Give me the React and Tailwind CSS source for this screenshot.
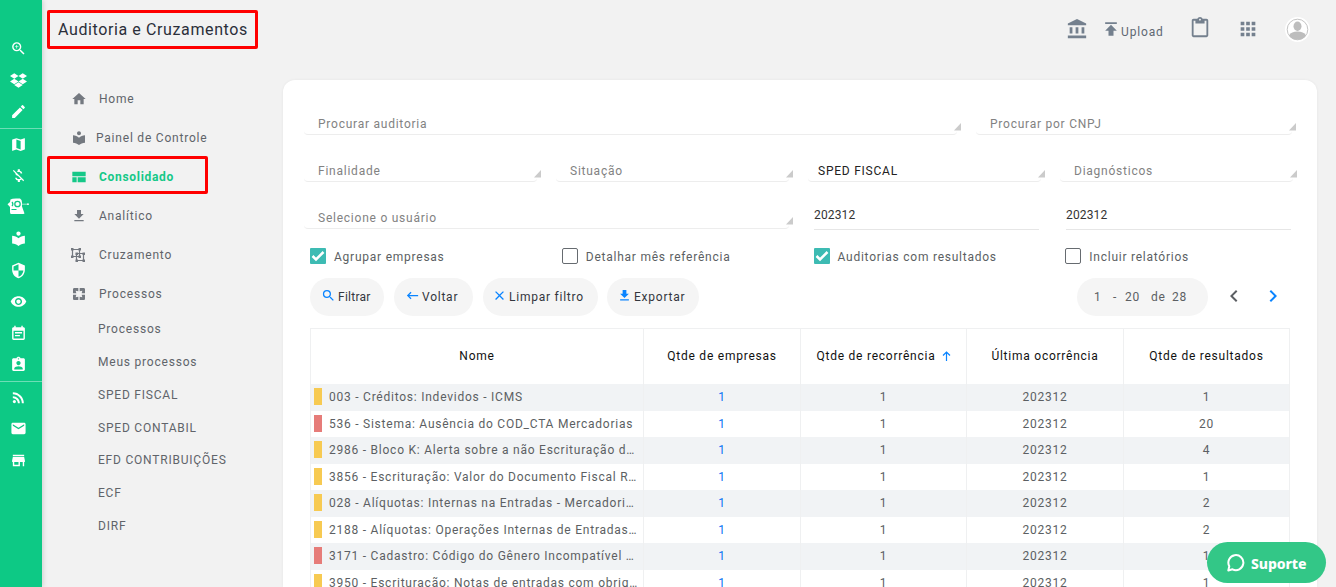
import {
  MdZoomIn, MdEdit, MdMap, MdMoneyOff, MdLocalLibrary, MdSecurity, MdVisibility,
  MdEventNote, MdAssignmentInd, MdRssFeed, MdMail, MdStore, MdHome, MdPages,
  MdAccountBalance, MdPublish, MdContentPaste, MdApps, MdSearch, MdClose,
  MdKeyboardBackspace, MdChevronLeft, MdChevronRight,
} from 'react-icons/md'
import { FaDropbox } from 'react-icons/fa'

function LayoutIcon({ size }) {
  return (
    <svg width={size} height={size} viewBox="0 0 24 24" fill="currentColor">
      <path d="M2 4v7h20V4zM2 12.5V20h6.5v-7.5zM10 12.5V20h12v-7.5z" />
    </svg>
  )
}

function DownloadIcon({ size }) {
  return (
    <svg width={size} height={size} viewBox="0 0 24 24" fill="currentColor">
      <path d="M19 9h-4V3H9v6H5l7 7 7-7zM5 18v2h14v-2H5z" />
    </svg>
  )
}

function UngroupIcon() {
  return (
    <svg width="14" height="14" viewBox="0 0 14 14" fill="none">
      <path d="M1.500 1.500h7v7h-7zM5.500 5.500h7v7h-7z" stroke="currentColor" strokeWidth="1.200" />
      <path
        d="M0 0h2.500v2.500H0zM7.500 0H10v2.500H7.500zM0 7.500h2.500V10H0zM7.500 7.500H10V10H7.500zM4.500 4.500H7V7H4.500zM11.500 4.500H14V7h-2.500zM4.500 11.500H7V14H4.500zM11.500 11.500H14V14h-2.500z"
        fill="currentColor"
      />
    </svg>
  )
}

function RobotIcon() {
  return (
    <svg className="shrink-0" width="23" height="18" viewBox="0 0 23 18" fill="none">
      <path d="M3.500 1.500Q5 .5 9 .5h4q2 1 2 4v4l2.500 7-1 .5H4Q3 16 3 14V9L.5 6.200 3 4z" fill="#fff" />
      <path d="M15 6.200h6" stroke="#fff" strokeWidth="0.600" />
      <circle cx="21" cy="6.200" r="0.900" fill="#fff" />
      <circle cx="10.500" cy="6" r="2.700" stroke="#0dc985" strokeWidth="1.300" />
      <path d="M5 4q1.800 2 0 4.200" stroke="#0dc985" strokeWidth="1.200" />
      <path d="M4.500 11.500h5" stroke="#0dc985" strokeWidth="1" />
    </svg>
  )
}

const railGroups = [
  [MdZoomIn, FaDropbox, MdEdit],
  [MdMap, MdMoneyOff, RobotIcon, MdLocalLibrary, MdSecurity, MdVisibility, MdEventNote, MdAssignmentInd],
  [MdRssFeed, MdMail, MdStore],
]

const menu = [
  { label: 'Home', icon: MdHome },
  { label: 'Painel de Controle', icon: MdLocalLibrary, near: true },
  { label: 'Consolidado', icon: LayoutIcon, active: true },
  { label: 'Analítico', icon: DownloadIcon },
  { label: 'Cruzamento', icon: UngroupIcon },
  { label: 'Processos', icon: MdPages },
]

const submenu = [
  'Processos',
  'Meus processos',
  'SPED FISCAL',
  'SPED CONTABIL',
  'EFD CONTRIBUIÇÕES',
  'ECF',
  'DIRF',
]

const columns = ['Nome', 'Qtde de empresas', 'Qtde de recorrência', 'Última ocorrência', 'Qtde de resultados']

const rows = [
  { name: '003 - Créditos: Indevidos - ICMS', results: 1 },
  { name: '536 - Sistema: Ausência do COD_CTA Mercadorias', results: 20, red: true },
  { name: '2986 - Bloco K: Alerta sobre a não Escrituração d…', results: 4 },
  { name: '3856 - Escrituração: Valor do Documento Fiscal R…', results: 1 },
  { name: '028 - Alíquotas: Internas na Entradas - Mercadori…', results: 2 },
  { name: '2188 - Alíquotas: Operações Internas de Entradas…', results: 2 },
  { name: '3171 - Cadastro: Código do Gênero Incompatível …', results: 1, red: true },
  { name: '3950 - Escrituração: Notas de entradas com obrig…', results: 1 },
]

function IconRail() {
  return (
    <nav className="z-10 flex w-[42px] shrink-0 flex-col bg-[#0dc985] pt-[33px] text-white shadow-[1px_0_5px_rgba(0,0,0,0.15)]">
      {railGroups.map((group, i) => (
        <div key={i} className={i < 2 ? 'border-b border-white/40' : ''}>
          {group.map((Icon, j) => (
            <div key={j} className="flex h-[31.500px] w-[37px] items-center justify-center">
              <Icon size={17} />
            </div>
          ))}
        </div>
      ))}
    </nav>
  )
}

function Sidebar() {
  return (
    <aside className="flex w-[241px] shrink-0 flex-col text-[12px] tracking-[0.790px] text-[#60646a]">
      <h1 className="mt-[10px] ml-[5px] flex h-[39px] w-[211px] items-center rounded-[2px] border-3 border-[#f00] pl-2 text-[16px] font-normal tracking-[0.610px] whitespace-nowrap text-[#2b2f3a]">
        Auditoria e Cruzamentos
      </h1>
      <ul className="mt-[30px] ml-[5px] h-[233.800px]">
        {menu.map(({ label, icon: Icon, near, active }) => (
          <li
            key={label}
            className={
              active
                ? '-mt-px mb-[2px] flex h-[38px] w-[161px] items-center rounded-[2px] border-3 border-[#f00] pt-[3px] pl-[21px] text-[#15c888]'
                : 'flex h-[39px] items-center pl-6'
            }
          >
            <span className={`${near ? 'w-[25px]' : 'w-7'} ${active ? '' : 'text-[#747980]'}`}>
              <Icon size={16} />
            </span>
            <span className={active ? 'font-bold tracking-[0.700px]' : ''}>{label}</span>
          </li>
        ))}
      </ul>
      <ul className="ml-14">
        {submenu.map((label) => (
          <li key={label} className="flex h-[32.800px] items-center">
            {label}
          </li>
        ))}
      </ul>
    </aside>
  )
}

function Header() {
  return (
    <header className="flex h-20 items-start justify-end pt-[17px] pr-[26px] text-[#74808e]">
      <MdAccountBalance className="mt-px mr-[13px]" size={22} />
      <div className="mr-[26px] flex items-center">
        <MdPublish className="-mt-px" size={20} />
        <span className="mt-[6px] w-[42px] text-[12px] tracking-[0.850px] text-[#5f6873]">Upload</span>
      </div>
      <MdContentPaste className="mr-[26px]" size={22} />
      <MdApps className="mt-px mr-[26px]" size={22} />
      <svg width="25" height="25" viewBox="0 0 25 25">
        <circle cx="12.500" cy="12.500" r="12.500" fill="#fff" />
        <circle cx="12.500" cy="12.500" r="10.300" fill="#fff" stroke="#c4c4c4" strokeWidth="1" />
        <ellipse cx="12.500" cy="9.300" rx="4" ry="4.700" fill="#bdbdbd" />
        <path d="M4 18.500c1.500-3 4.500-4 8.500-4s7 1 8.500 4c-2 3-5 4.300-8.500 4.300S6 21.500 4 18.500z" fill="#bdbdbd" />
      </svg>
    </header>
  )
}

function SelectField({ label, className, filled }) {
  return (
    <div className={`flex h-[47px] items-end ${className}`}>
      <div
        className={`flex h-[27px] flex-1 items-center rounded-[4px] border-b border-[#ededed] pt-[6px] ${
          filled ? 'pl-[10px] text-[#222]' : 'pl-[14px] text-[#828282]'
        }`}
      >
        {label}
      </div>
      <svg className="mb-1 -ml-[3px]" width="8" height="8" viewBox="0 0 8 8">
        <path d="M7 0v7.500H0z" fill="#cbcbcb" />
      </svg>
    </div>
  )
}

function PeriodField({ value }) {
  return (
    <div className="flex h-[48px] w-[225px] items-center border-b border-[#e6e6e6] pt-[18px] tracking-[0.150px] text-[#333]">
      {value}
    </div>
  )
}

function Checkbox({ label, checked }) {
  return (
    <label className="flex w-[252px] items-center gap-2">
      {checked ? (
        <span className="flex size-4 items-center justify-center rounded-[1px] bg-[#3dbbb3]">
          <svg width="14" height="12" viewBox="0 0 14 12" fill="none" stroke="#fff" strokeWidth="2.500">
            <path d="M1.500 6l3.500 3.500L12.500 2" />
          </svg>
        </span>
      ) : (
        <span className="size-4 rounded-[2px] border border-[#666b70]" />
      )}
      <span className="pt-[2px]">{label}</span>
    </label>
  )
}

function ActionButton({ icon: Icon, label, className }) {
  return (
    <button
      type="button"
      className={`flex h-[38px] items-center rounded-full bg-[#f5f5f5] pb-px whitespace-nowrap text-[#33363d] ${className}`}
    >
      <span className="pb-[2px] text-[#0a84ff]">
        <Icon size={15} />
      </span>
      <span className="ml-[2px] pt-px">{label}</span>
    </button>
  )
}

function AuditTable() {
  const grid = 'grid grid-cols-[333px_157px_166px_157px_166px]'
  return (
    <div className="ml-[27px] w-[980px] border-t border-l border-[#eff0f1]">
      <div className={`${grid} h-[55.400px] text-[#111]`}>
        {columns.map((name, i) => (
          <div key={name} className="flex items-center justify-center border-r border-[#eff0f1] pb-px whitespace-nowrap">
            {name}
            {i === 2 && (
              <svg className="ml-[6px]" width="9" height="10" viewBox="0 0 9 10" fill="none" stroke="#0a84ff" strokeWidth="1.200">
                <path d="M4.500 10V1M1 4.500L4.500 1 8 4.500" />
              </svg>
            )}
          </div>
        ))}
      </div>
      {rows.map(({ name, results, red }, i) => (
        <div key={name} className={`${grid} h-[26.500px] text-center leading-[26px] ${i % 2 ? 'bg-white' : 'bg-[#f1f3f5]'}`}>
          <div className="flex border-r border-[#eff0f1] pl-[3px] text-left whitespace-nowrap">
            <span className={`mt-[4px] mr-[7px] h-[17px] w-2 shrink-0 ${red ? 'bg-[#e67c79]' : 'bg-[#f7ca52]'}`} />
            {name}
          </div>
          <div className="border-r border-[#eff0f1] text-[#0a74f5]">1</div>
          <div className="border-r border-[#eff0f1]">1</div>
          <div className="border-r border-[#eff0f1]">202312</div>
          <div className="border-r border-[#eff0f1]">{results}</div>
        </div>
      ))}
    </div>
  )
}

function SupportButton() {
  return (
    <button
      type="button"
      className="absolute right-[10px] bottom-1 flex h-[41px] w-[119px] items-center rounded-full bg-[#33c787] pl-5 font-['Noto_Sans',sans-serif] text-[14px] font-extrabold text-white"
    >
      <svg width="18" height="19" viewBox="0 0 18 19" fill="none" stroke="#fff" strokeWidth="2" strokeLinejoin="round">
        <path d="M1.300 17.500l1-4.300A7.500 7.500 0 1 1 5.500 16.300z" />
      </svg>
      <span className="mt-px ml-1.5 tracking-[-0.100px]">Suporte</span>
    </button>
  )
}

export default function App() {
  return (
    <div className="relative flex h-screen w-full overflow-hidden bg-[#f2f2f2] font-['Roboto',sans-serif]">
      <IconRail />
      <Sidebar />
      <div className="flex min-w-0 flex-1 flex-col">
        <Header />
        <main className="h-[507px] w-[1034px] rounded-t-xl bg-white pt-[8px] text-[12px] tracking-[0.760px] text-[#5c5f63] shadow-[0_0_3px_rgba(0,0,0,0.06)]">
          <div className="flex gap-[14px] pl-[21px]">
            <SelectField label="Procurar auditoria" className="w-[658px]" />
            <SelectField label="Procurar por CNPJ" className="w-[321px]" />
          </div>
          <div className="flex gap-[14px] pl-[21px]">
            <SelectField label="Finalidade" className="w-[238px]" />
            <SelectField label="Situação" className="w-[238px]" />
            <SelectField label="SPED FISCAL" className="w-[238px]" filled />
            <SelectField label="Diagnósticos" className="w-[238px]" />
          </div>
          <div className="flex pl-[21px]">
            <SelectField label="Selecione o usuário" className="mr-5 w-[490px]" />
            <PeriodField value="202312" />
            <div className="w-[27px]" />
            <PeriodField value="202312" />
          </div>
          <div className="mt-[17px] flex h-[18px] items-center pl-[27px]">
            <Checkbox label="Agrupar empresas" checked />
            <Checkbox label="Detalhar mês referência" />
            <Checkbox label="Auditorias com resultados" checked />
            <Checkbox label="Incluir relatórios" />
          </div>
          <div className="mt-[13px] mb-[12px] flex items-center pl-[27px]">
            <ActionButton icon={MdSearch} label="Filtrar" className="w-[74px] pl-[11px] tracking-[0.250px]" />
            <ActionButton icon={MdKeyboardBackspace} label="Voltar" className="ml-[10px] w-[79px] pl-[11px]" />
            <ActionButton icon={MdClose} label="Limpar filtro" className="ml-[10px] w-[115px] pl-[9px]" />
            <ActionButton icon={DownloadIcon} label="Exportar" className="ml-[9px] w-[92px] pl-[10px]" />
            <div className="ml-[378px] flex h-[38px] w-[131px] items-center rounded-full bg-[#f5f5f5] pl-[17px]">
              <span className="w-[19px]">1</span>
              <span className="w-[12px]">-</span>
              <span className="w-[26px]">20</span>
              <span className="w-[21px]">de</span>
              <span>28</span>
            </div>
            <MdChevronLeft className="mb-[3px] ml-[14px]" size={24} />
            <MdChevronRight className="mb-[3px] ml-[15px] text-[#0a84ff]" size={24} />
          </div>
          <AuditTable />
        </main>
      </div>
      <SupportButton />
    </div>
  )
}
